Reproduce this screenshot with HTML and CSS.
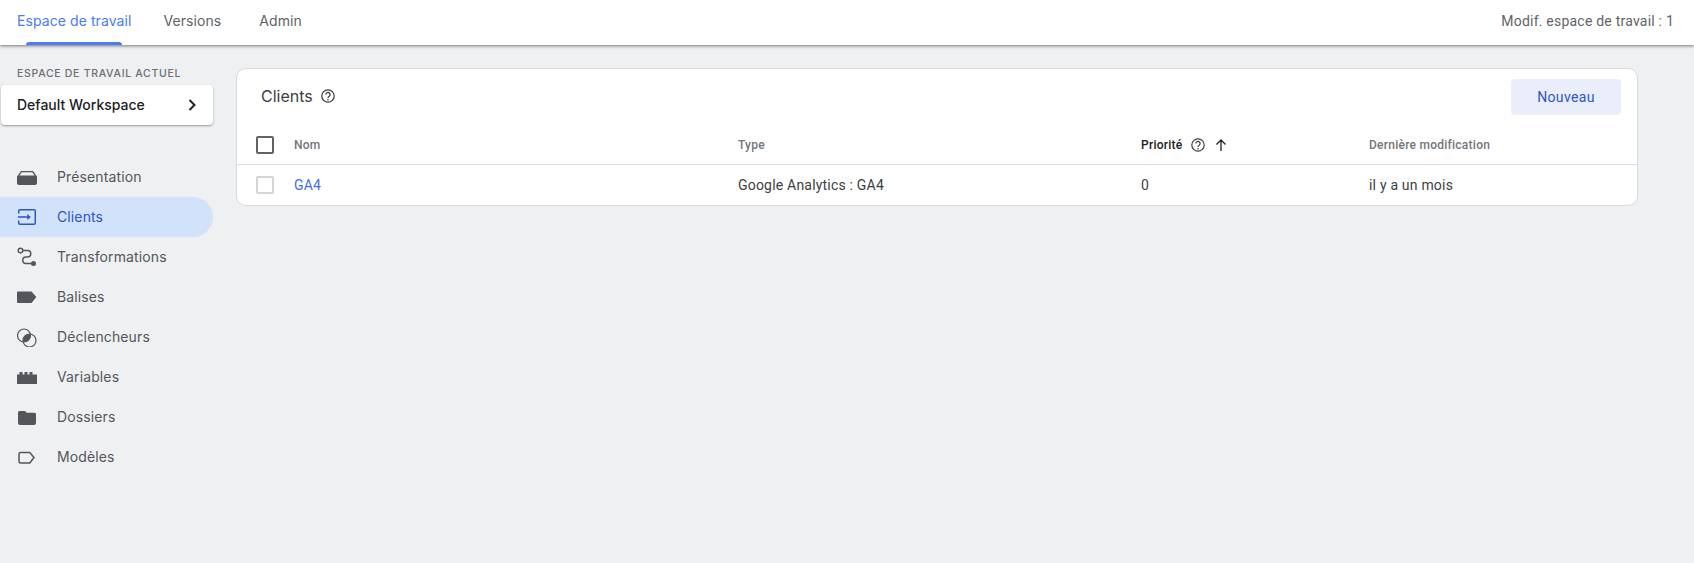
FILE: index.html
```html
<!DOCTYPE html>
<html lang="fr">
<head>
    <meta charset="UTF-8">
    <title>Clients</title>
    <link rel="stylesheet" href="styles.css">
</head>
<body>

<header class="topbar">
    <nav class="tabs">
        <a class="tab tab-active">Espace de travail</a>
        <a class="tab">Versions</a>
        <a class="tab">Admin</a>
    </nav>
    <div class="changes">Modif. espace de travail : 1</div>
</header>

<div class="page">
    <aside class="sidebar">
        <div class="workspace-label">ESPACE DE TRAVAIL ACTUEL</div>
        <div class="workspace-card">
            <span>Default Workspace</span>
            <svg class="chevron" width="20" height="20" viewBox="0 0 20 20"><path d="M7.500 5l5 5-5 5" fill="none" stroke="#202124" stroke-width="2"/></svg>
        </div>

        <ul class="nav">
            <li class="nav-item">
                <svg class="nav-icon" width="20" height="20" viewBox="0 0 20 20"><path d="M4 4h12l4 5.500V16a2 2 0 0 1-2 2H2a2 2 0 0 1-2-2V9.500zM4.800 5.300L2.300 8.500h15.400l-2.500-3.200z" fill="#54565b" fill-rule="evenodd"/></svg>
                Présentation
            </li>
            <li class="nav-item nav-active">
                <svg class="nav-icon" width="20" height="20" viewBox="0 0 20 20"><path d="M1.700 6.500V4A1.300 1.300 0 0 1 3 2.700h14A1.300 1.300 0 0 1 18.300 4v12a1.300 1.300 0 0 1-1.300 1.300H3A1.300 1.300 0 0 1 1.700 16v-2.500" fill="none" stroke="#2a56c6" stroke-width="1.500"/><path d="M1 9.200h9.300V7l3.500 3-3.500 3v-2.200H1z" fill="#2a56c6"/></svg>
                Clients
            </li>
            <li class="nav-item">
                <svg class="nav-icon" width="20" height="20" viewBox="0 0 20 20"><circle cx="3.500" cy="3.500" r="2.300" fill="none" stroke="#54565b" stroke-width="1.400"/><circle cx="16.500" cy="16.500" r="2.500" fill="#54565b"/><path d="M5.800 3.500h4.700a3.200 3.200 0 0 1 0 6.500H9a3.200 3.200 0 0 0 0 6.500h6" fill="none" stroke="#54565b" stroke-width="1.500"/></svg>
                Transformations
            </li>
            <li class="nav-item">
                <svg class="nav-icon" width="20" height="20" viewBox="0 0 20 20"><path d="M1 4.500h13.500l4.800 5.500-4.800 6H1a1 1 0 0 1-1-1V5.500a1 1 0 0 1 1-1z" fill="#54565b"/></svg>
                Balises
            </li>
            <li class="nav-item">
                <svg class="nav-icon" width="20" height="20" viewBox="0 0 20 20"><circle cx="7" cy="8.500" r="6.500" fill="none" stroke="#54565b" stroke-width="1.200"/><circle cx="12.500" cy="13.500" r="6.500" fill="none" stroke="#54565b" stroke-width="1.200"/><path d="M13.340 7.060A6.500 6.500 0 0 1 6.160 14.940 6.500 6.500 0 0 1 13.340 7.060z" fill="#54565b"/></svg>
                Déclencheurs
            </li>
            <li class="nav-item">
                <svg class="nav-icon" width="20" height="20" viewBox="0 0 20 20"><path d="M0 17V7.500h2.500V5h3v2.500h2V5h3v2.500h2V5h3v2.500H20V17z" fill="#54565b"/></svg>
                Variables
            </li>
            <li class="nav-item">
                <svg class="nav-icon" width="20" height="20" viewBox="0 0 20 20"><path d="M2.500 4h5.500l1.800 1.800h7.700A1.500 1.500 0 0 1 19 7.300V16a2 2 0 0 1-2 2H3a2 2 0 0 1-2-2V5.500A1.500 1.500 0 0 1 2.500 4z" fill="#54565b"/></svg>
                Dossiers
            </li>
            <li class="nav-item">
                <svg class="nav-icon" width="20" height="20" viewBox="0 0 20 20"><path d="M3.500 5.500h9.300l4.200 5-4.200 5.500H3.500A1.500 1.500 0 0 1 2 14.500V7a1.500 1.500 0 0 1 1.500-1.500z" fill="none" stroke="#54565b" stroke-width="1.500"/></svg>
                Modèles
            </li>
        </ul>
    </aside>

    <main class="card">
        <div class="card-head">
            <div class="card-title">
                Clients
                <svg width="16" height="16" viewBox="0 0 16 16"><circle cx="8" cy="8" r="6.200" fill="none" stroke="#3c4043" stroke-width="1.300"/><path d="M5.900 6.500a2.100 2.100 0 1 1 3.300 1.700c-.8.500-1.200.9-1.200 1.800" fill="none" stroke="#3c4043" stroke-width="1.300"/><circle cx="8" cy="11.700" r=".8" fill="#3c4043"/></svg>
            </div>
            <button class="btn-new">Nouveau</button>
        </div>

        <div class="row row-head">
            <div><span class="check check-head"></span></div>
            <div>Nom</div>
            <div>Type</div>
            <div class="sort-col">
                Priorité
                <svg class="help" width="16" height="16" viewBox="0 0 16 16"><circle cx="8" cy="8" r="6.200" fill="none" stroke="#3c4043" stroke-width="1.200"/><path d="M5.900 6.500a2.100 2.100 0 1 1 3.300 1.700c-.8.500-1.200.9-1.200 1.800" fill="none" stroke="#3c4043" stroke-width="1.200"/><circle cx="8" cy="11.700" r=".8" fill="#3c4043"/></svg>
                <svg class="arrow" width="14" height="14" viewBox="0 0 14 14"><path d="M7 13V2M2.500 6.500L7 2l4.500 4.500" fill="none" stroke="#202124" stroke-width="1.300"/></svg>
            </div>
            <div>Dernière modification</div>
        </div>
        <div class="row row-body">
            <div><span class="check"></span></div>
            <div><a class="link">GA4</a></div>
            <div>Google Analytics : GA4</div>
            <div>0</div>
            <div>il y a un mois</div>
        </div>
    </main>
</div>

</body>
</html>
```

FILE: styles.css
```css
* {
    box-sizing: border-box;
}
body {
    margin: 0;
    height: 563px;
    overflow: hidden;
    background: #eff0f2;
    font-family: Inter, Roboto, sans-serif;
    color: #3c4043;
}
.topbar {
    height: 45px;
    background: #fff;
    display: flex;
    justify-content: space-between;
    box-shadow: 0 1px 3px rgba(60, 64, 67, 0.7);
    position: relative;
}
.tabs {
    display: flex;
    padding-left: 17px;
    gap: 32px;
}
.tab {
    font-size: 14px;
    line-height: 42px;
    color: #5f6368;
    position: relative;
    letter-spacing: 0.08px;
}
.tab:last-child {
    margin-left: 6px;
}
.tab-active {
    color: #4a7cf0;
}
.tab-active::after {
    content: "";
    position: absolute;
    left: 9px;
    right: 9px;
    bottom: 0;
    height: 3px;
    border-radius: 3px 3px 0 0;
    background: #4a7cf0;
}
.changes {
    font-family: Roboto, sans-serif;
    font-size: 14px;
    line-height: 42px;
    letter-spacing: 0.22px;
    color: #5f6368;
    padding-right: 20px;
}
.page {
    display: flex;
}
.sidebar {
    width: 236px;
    padding-top: 22px;
    flex-shrink: 0;
}
.workspace-label {
    font-size: 10.500px;
    font-weight: 500;
    letter-spacing: 0.7px;
    color: #6b6e73;
    padding-left: 17px;
    line-height: 14px;
    margin-bottom: 4px;
}
.workspace-card {
    width: 212px;
    height: 40px;
    margin-left: 1px;
    padding: 0 16px 1px;
    background: #fff;
    border-radius: 4px;
    box-shadow: 0 1px 2px rgba(60, 64, 67, 0.5);
    display: flex;
    align-items: center;
    justify-content: space-between;
    font-size: 14px;
    font-weight: 500;
    color: #202124;
}
.chevron {
    margin-right: -5px;
}
.nav {
    list-style: none;
    margin: 32px 0 0;
    padding: 0;
}
.nav-item {
    width: 213px;
    height: 40px;
    display: flex;
    align-items: center;
    gap: 20px;
    padding: 0 0 1px 17px;
    font-size: 14px;
    letter-spacing: 0.12px;
    color: #54565b;
    border-radius: 0 20px 20px 0;
}
.nav-icon {
    margin-top: 1px;
}
.nav-active {
    background: #d2e2fb;
    color: #2a56c6;
}
.card {
    width: 1402px;
    height: 138px;
    margin-top: 23px;
    background: #fff;
    border: 1px solid #d9dadd;
    border-radius: 10px;
    align-self: flex-start;
}
.card-head {
    height: 57px;
    padding: 10px 16px 0 24px;
    display: flex;
    justify-content: space-between;
}
.card-title {
    font-size: 16px;
    color: #3c4043;
    display: flex;
    align-items: center;
    gap: 7px;
    height: 33px;
}
.btn-new {
    width: 110px;
    height: 36px;
    border: none;
    border-radius: 4px;
    background: #e9eefa;
    color: #2a56c6;
    font-family: Roboto, sans-serif;
    font-size: 14px;
    letter-spacing: 0.35px;
}
.row {
    display: grid;
    grid-template-columns: 38px 444px 403px 228px 1fr;
    align-items: center;
    padding-left: 19px;
    font-family: Roboto, sans-serif;
}
.row-head {
    height: 39px;
    border-bottom: 1px solid #d9dadd;
    font-size: 12px;
    font-weight: 500;
    letter-spacing: 0.25px;
    color: #73767a;
}
.row-body {
    height: 40px;
    padding-bottom: 1px;
    font-size: 14px;
    letter-spacing: 0.2px;
    color: #3c4043;
}
.check {
    display: block;
    width: 18px;
    height: 18px;
    border: 2px solid #d4d5d7;
    border-radius: 2px;
}
.check-head {
    border-color: #5f6368;
}
.link {
    color: #3f6fe3;
}
.sort-col {
    display: flex;
    align-items: center;
    color: #202124;
}
.help {
    margin-left: 7px;
}
.arrow {
    margin-left: 8px;
}
```
